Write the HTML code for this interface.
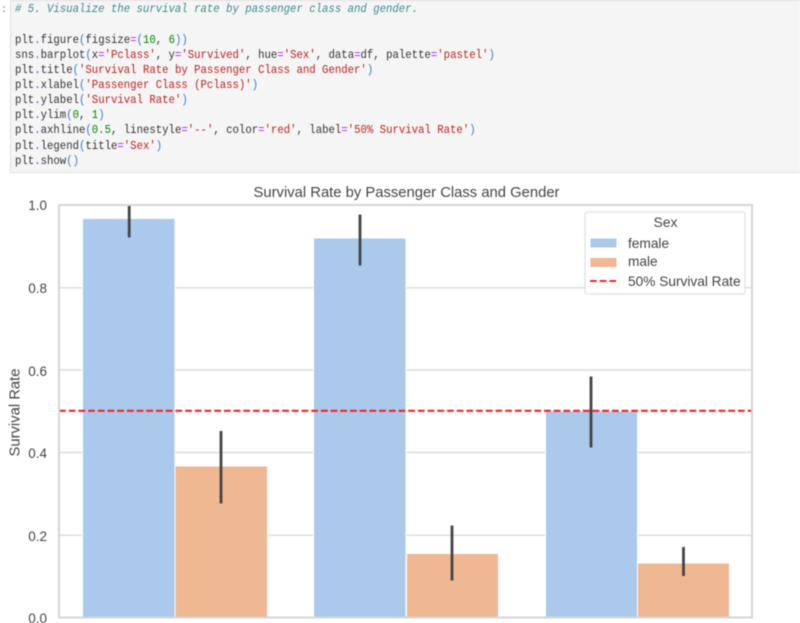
<!DOCTYPE html>
<html><head><meta charset="utf-8"><style>
html,body{margin:0;padding:0;background:#fff;width:800px;height:623px;overflow:hidden}
svg{display:block;position:absolute;left:0;top:0;filter:blur(.45px)}
.c{font-family:"Liberation Mono",monospace;font-size:12px;white-space:pre;fill:#333}
.k{fill:#ba2121}.o{fill:#aa22ff}.n{fill:#080}.p{fill:#2f7fc8}.h{fill:#3d8a8a;font-style:italic}
.s{font-family:"Liberation Sans",sans-serif;fill:#444}
</style></head><body>
<svg width="800" height="623" viewBox="0 0 800 623" xmlns="http://www.w3.org/2000/svg">
<text x="1" y="12" font-family="Liberation Mono,monospace" font-size="10" fill="#777">:</text>
<rect x="10.5" y="0.5" width="790" height="172" fill="#f5f5f5" stroke="#e0e0e0"/>
<g transform="translate(15 0) scale(.889 1)">
<text class="c h" x="0" y="12"># 5. Visualize the survival rate by passenger class and gender.</text>
<text class="c" x="0" y="43">plt<tspan class="o">.</tspan>figure<tspan class="p">(</tspan>figsize<tspan class="o">=</tspan><tspan class="p">(</tspan><tspan class="n">10</tspan>, <tspan class="n">6</tspan><tspan class="p">))</tspan></text>
<text class="c" x="0" y="58">sns<tspan class="o">.</tspan>barplot<tspan class="p">(</tspan>x<tspan class="o">=</tspan><tspan class="k">'Pclass'</tspan>, y<tspan class="o">=</tspan><tspan class="k">'Survived'</tspan>, hue<tspan class="o">=</tspan><tspan class="k">'Sex'</tspan>, data<tspan class="o">=</tspan>df, palette<tspan class="o">=</tspan><tspan class="k">'pastel'</tspan><tspan class="p">)</tspan></text>
<text class="c" x="0" y="73">plt<tspan class="o">.</tspan>title<tspan class="p">(</tspan><tspan class="k">'Survival Rate by Passenger Class and Gender'</tspan><tspan class="p">)</tspan></text>
<text class="c" x="0" y="88">plt<tspan class="o">.</tspan>xlabel<tspan class="p">(</tspan><tspan class="k">'Passenger Class (Pclass)'</tspan><tspan class="p">)</tspan></text>
<text class="c" x="0" y="103">plt<tspan class="o">.</tspan>ylabel<tspan class="p">(</tspan><tspan class="k">'Survival Rate'</tspan><tspan class="p">)</tspan></text>
<text class="c" x="0" y="118">plt<tspan class="o">.</tspan>ylim<tspan class="p">(</tspan><tspan class="n">0</tspan>, <tspan class="n">1</tspan><tspan class="p">)</tspan></text>
<text class="c" x="0" y="133">plt<tspan class="o">.</tspan>axhline<tspan class="p">(</tspan><tspan class="n">0.5</tspan>, linestyle<tspan class="o">=</tspan><tspan class="k">'--'</tspan>, color<tspan class="o">=</tspan><tspan class="k">'red'</tspan>, label<tspan class="o">=</tspan><tspan class="k">'50% Survival Rate'</tspan><tspan class="p">)</tspan></text>
<text class="c" x="0" y="149">plt<tspan class="o">.</tspan>legend<tspan class="p">(</tspan>title<tspan class="o">=</tspan><tspan class="k">'Sex'</tspan><tspan class="p">)</tspan></text>
<text class="c" x="0" y="164">plt<tspan class="o">.</tspan>show<tspan class="p">()</tspan></text>
</g>

<text class="s" x="406.5" y="197" font-size="14.8" text-anchor="middle">Survival Rate by Passenger Class and Gender</text>

<g stroke="#dcdcdc" stroke-width="1.5" fill="none">
<path d="M59 287.7H752M59 370H752M59 452.5H752M59 535.3H752"/>
</g>
<g stroke="#fff" stroke-width="1" fill="#abc9ea">
<rect x="82.5" y="218.5" width="92.5" height="399"/>
<rect x="313.5" y="238" width="92.5" height="379.5"/>
<rect x="545.5" y="411" width="92" height="206.5"/>
</g>
<g stroke="#fff" stroke-width="1" fill="#efb792">
<rect x="175" y="466" width="92.5" height="151.5"/>
<rect x="406.5" y="553.5" width="92" height="64"/>
<rect x="637.5" y="563" width="92" height="54.5"/>
</g>
<path d="M59 410.8H752" stroke="#f5222a" stroke-width="2.2" stroke-dasharray="6.8 2.9" fill="none"/>
<g stroke="#444" stroke-width="2.8" stroke-linecap="butt">
<path d="M129.2 205V237.5M221 431V503.5M360 214.5V265.5M452 525.5V580.5M591 376.5V447.5M683.5 547V576"/>
</g>
<rect x="59" y="205" width="693" height="412.5" fill="none" stroke="#d6d6d6" stroke-width="2"/>

<g text-anchor="end">
<text class="s" font-size="13.5" x="47" y="210">1.0</text>
<text class="s" font-size="13.5" x="47" y="293">0.8</text>
<text class="s" font-size="13.5" x="47" y="376">0.6</text>
<text class="s" font-size="13.5" x="47" y="458">0.4</text>
<text class="s" font-size="13.5" x="47" y="541">0.2</text>
<text class="s" font-size="13.5" x="47" y="623">0.0</text>
</g>
<text class="s" font-size="14.8" text-anchor="middle" transform="translate(19.5 412.5) rotate(-90)">Survival Rate</text>

<rect x="585" y="212" width="160" height="82" rx="2.5" fill="#fff" fill-opacity=".9" stroke="#dedede" stroke-width="1.2"/>
<text class="s" x="665.5" y="227" font-size="14" text-anchor="middle">Sex</text>
<rect x="590.5" y="238.5" width="26" height="9" fill="#abc9ea"/>
<rect x="590.5" y="258" width="26" height="9" fill="#efb792"/>
<path d="M590 281H617" stroke="#f5222a" stroke-width="2" stroke-dasharray="6.8 2.9"/>
<text class="s" x="628" y="248" font-size="13.7">female</text>
<text class="s" x="628" y="266" font-size="13.7">male</text>
<text class="s" x="628" y="286" font-size="13.7">50% Survival Rate</text>
</svg>
</body></html>
